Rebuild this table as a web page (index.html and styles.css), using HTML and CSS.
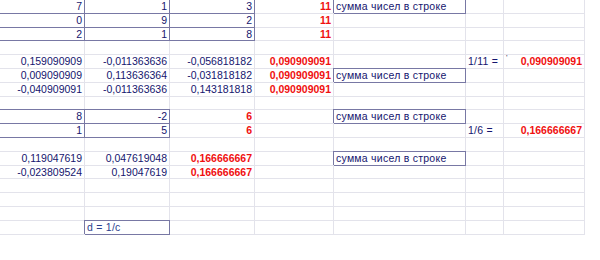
FILE: index.html
```html
<!DOCTYPE html>
<html>
<head>
<meta charset="utf-8">
<link rel="stylesheet" href="styles.css">
</head>
<body>
<div class="sheet">
  <!-- row 1 -->
  <div class="c n bx">7</div><div class="c n bx">1</div><div class="c n bx">3</div><div class="c r">11</div><div class="c t bx">сумма чисел в строке</div><div class="c"></div><div class="c"></div>
  <!-- row 2 -->
  <div class="c n bx">0</div><div class="c n bx">9</div><div class="c n bx">2</div><div class="c r">11</div><div class="c"></div><div class="c"></div><div class="c"></div>
  <!-- row 3 -->
  <div class="c n bx">2</div><div class="c n bx">1</div><div class="c n bx">8</div><div class="c r">11</div><div class="c"></div><div class="c"></div><div class="c"></div>
  <!-- row 4 -->
  <div class="c"></div><div class="c"></div><div class="c"></div><div class="c"></div><div class="c"></div><div class="c"></div><div class="c"></div>
  <!-- row 5 -->
  <div class="c n">0,159090909</div><div class="c n">-0,011363636</div><div class="c n">-0,056818182</div><div class="c r">0,090909091</div><div class="c"></div><div class="c t">1/11 =</div><div class="c r split"><span class="tick">'</span><span>0,090909091</span></div>
  <!-- row 6 -->
  <div class="c n">0,009090909</div><div class="c n">0,113636364</div><div class="c n">-0,031818182</div><div class="c r">0,090909091</div><div class="c t bx">сумма чисел в строке</div><div class="c"></div><div class="c"></div>
  <!-- row 7 -->
  <div class="c n">-0,040909091</div><div class="c n">-0,011363636</div><div class="c n">0,143181818</div><div class="c r">0,090909091</div><div class="c"></div><div class="c"></div><div class="c"></div>
  <!-- row 8 -->
  <div class="c"></div><div class="c"></div><div class="c"></div><div class="c"></div><div class="c"></div><div class="c"></div><div class="c"></div>
  <!-- row 9 -->
  <div class="c n bx">8</div><div class="c n bx">-2</div><div class="c r">6</div><div class="c"></div><div class="c t bx">сумма чисел в строке</div><div class="c"></div><div class="c"></div>
  <!-- row 10 -->
  <div class="c n bx">1</div><div class="c n bx">5</div><div class="c r">6</div><div class="c"></div><div class="c"></div><div class="c t">1/6 =</div><div class="c r">0,166666667</div>
  <!-- row 11 -->
  <div class="c"></div><div class="c"></div><div class="c"></div><div class="c"></div><div class="c"></div><div class="c"></div><div class="c"></div>
  <!-- row 12 -->
  <div class="c n">0,119047619</div><div class="c n">0,047619048</div><div class="c r">0,166666667</div><div class="c"></div><div class="c t bx">сумма чисел в строке</div><div class="c"></div><div class="c"></div>
  <!-- row 13 -->
  <div class="c n">-0,023809524</div><div class="c n">0,19047619</div><div class="c r">0,166666667</div><div class="c"></div><div class="c"></div><div class="c"></div><div class="c"></div>
  <!-- row 14 -->
  <div class="c"></div><div class="c"></div><div class="c"></div><div class="c"></div><div class="c"></div><div class="c"></div><div class="c"></div>
  <!-- row 15 -->
  <div class="c"></div><div class="c"></div><div class="c"></div><div class="c"></div><div class="c"></div><div class="c"></div><div class="c"></div>
  <!-- row 16 -->
  <div class="c"></div><div class="c"></div><div class="c"></div><div class="c"></div><div class="c"></div><div class="c"></div><div class="c"></div>
  <!-- row 17 -->
  <div class="c"></div><div class="c t bx d">d = 1/c</div><div class="c"></div><div class="c"></div><div class="c"></div><div class="c"></div><div class="c"></div>
</div>
</body>
</html>
```
FILE: styles.css
```css
html, body {
  margin: 0;
  padding: 0;
  background: #ffffff;
}

.sheet {
  display: grid;
  grid-template-columns: 85px 85px 85px 79px 132px 38px 81px;
  grid-auto-rows: 13.8px;
  width: 585px;
  font-family: "Liberation Sans", Arial, sans-serif;
  font-size: 10.5px;
  color: #15156e;
}

.c {
  box-sizing: border-box;
  border-right: 1px solid #e3e3eb;
  border-bottom: 1px solid #e3e3eb;
  line-height: 13px;
  white-space: nowrap;
  overflow: visible;
  padding: 0 2px;
}

.n {
  text-align: right;
}

.r {
  text-align: right;
  color: #f01010;
  font-weight: bold;
}

.t {
  text-align: left;
  letter-spacing: 0.25px;
}

.bx {
  border-right-color: #7878a4;
  border-bottom-color: #7878a4;
  box-shadow: -1px -1px 0 #7878a4, 0 -1px 0 #7878a4;
}

.n.bx {
  letter-spacing: 0;
}

.split {
  display: flex;
  justify-content: space-between;
}

.tick {
  font-weight: normal;
  color: #333355;
  font-size: 8px;
  line-height: 6px;
}

.d {
  color: #2c3f8e;
}
```
